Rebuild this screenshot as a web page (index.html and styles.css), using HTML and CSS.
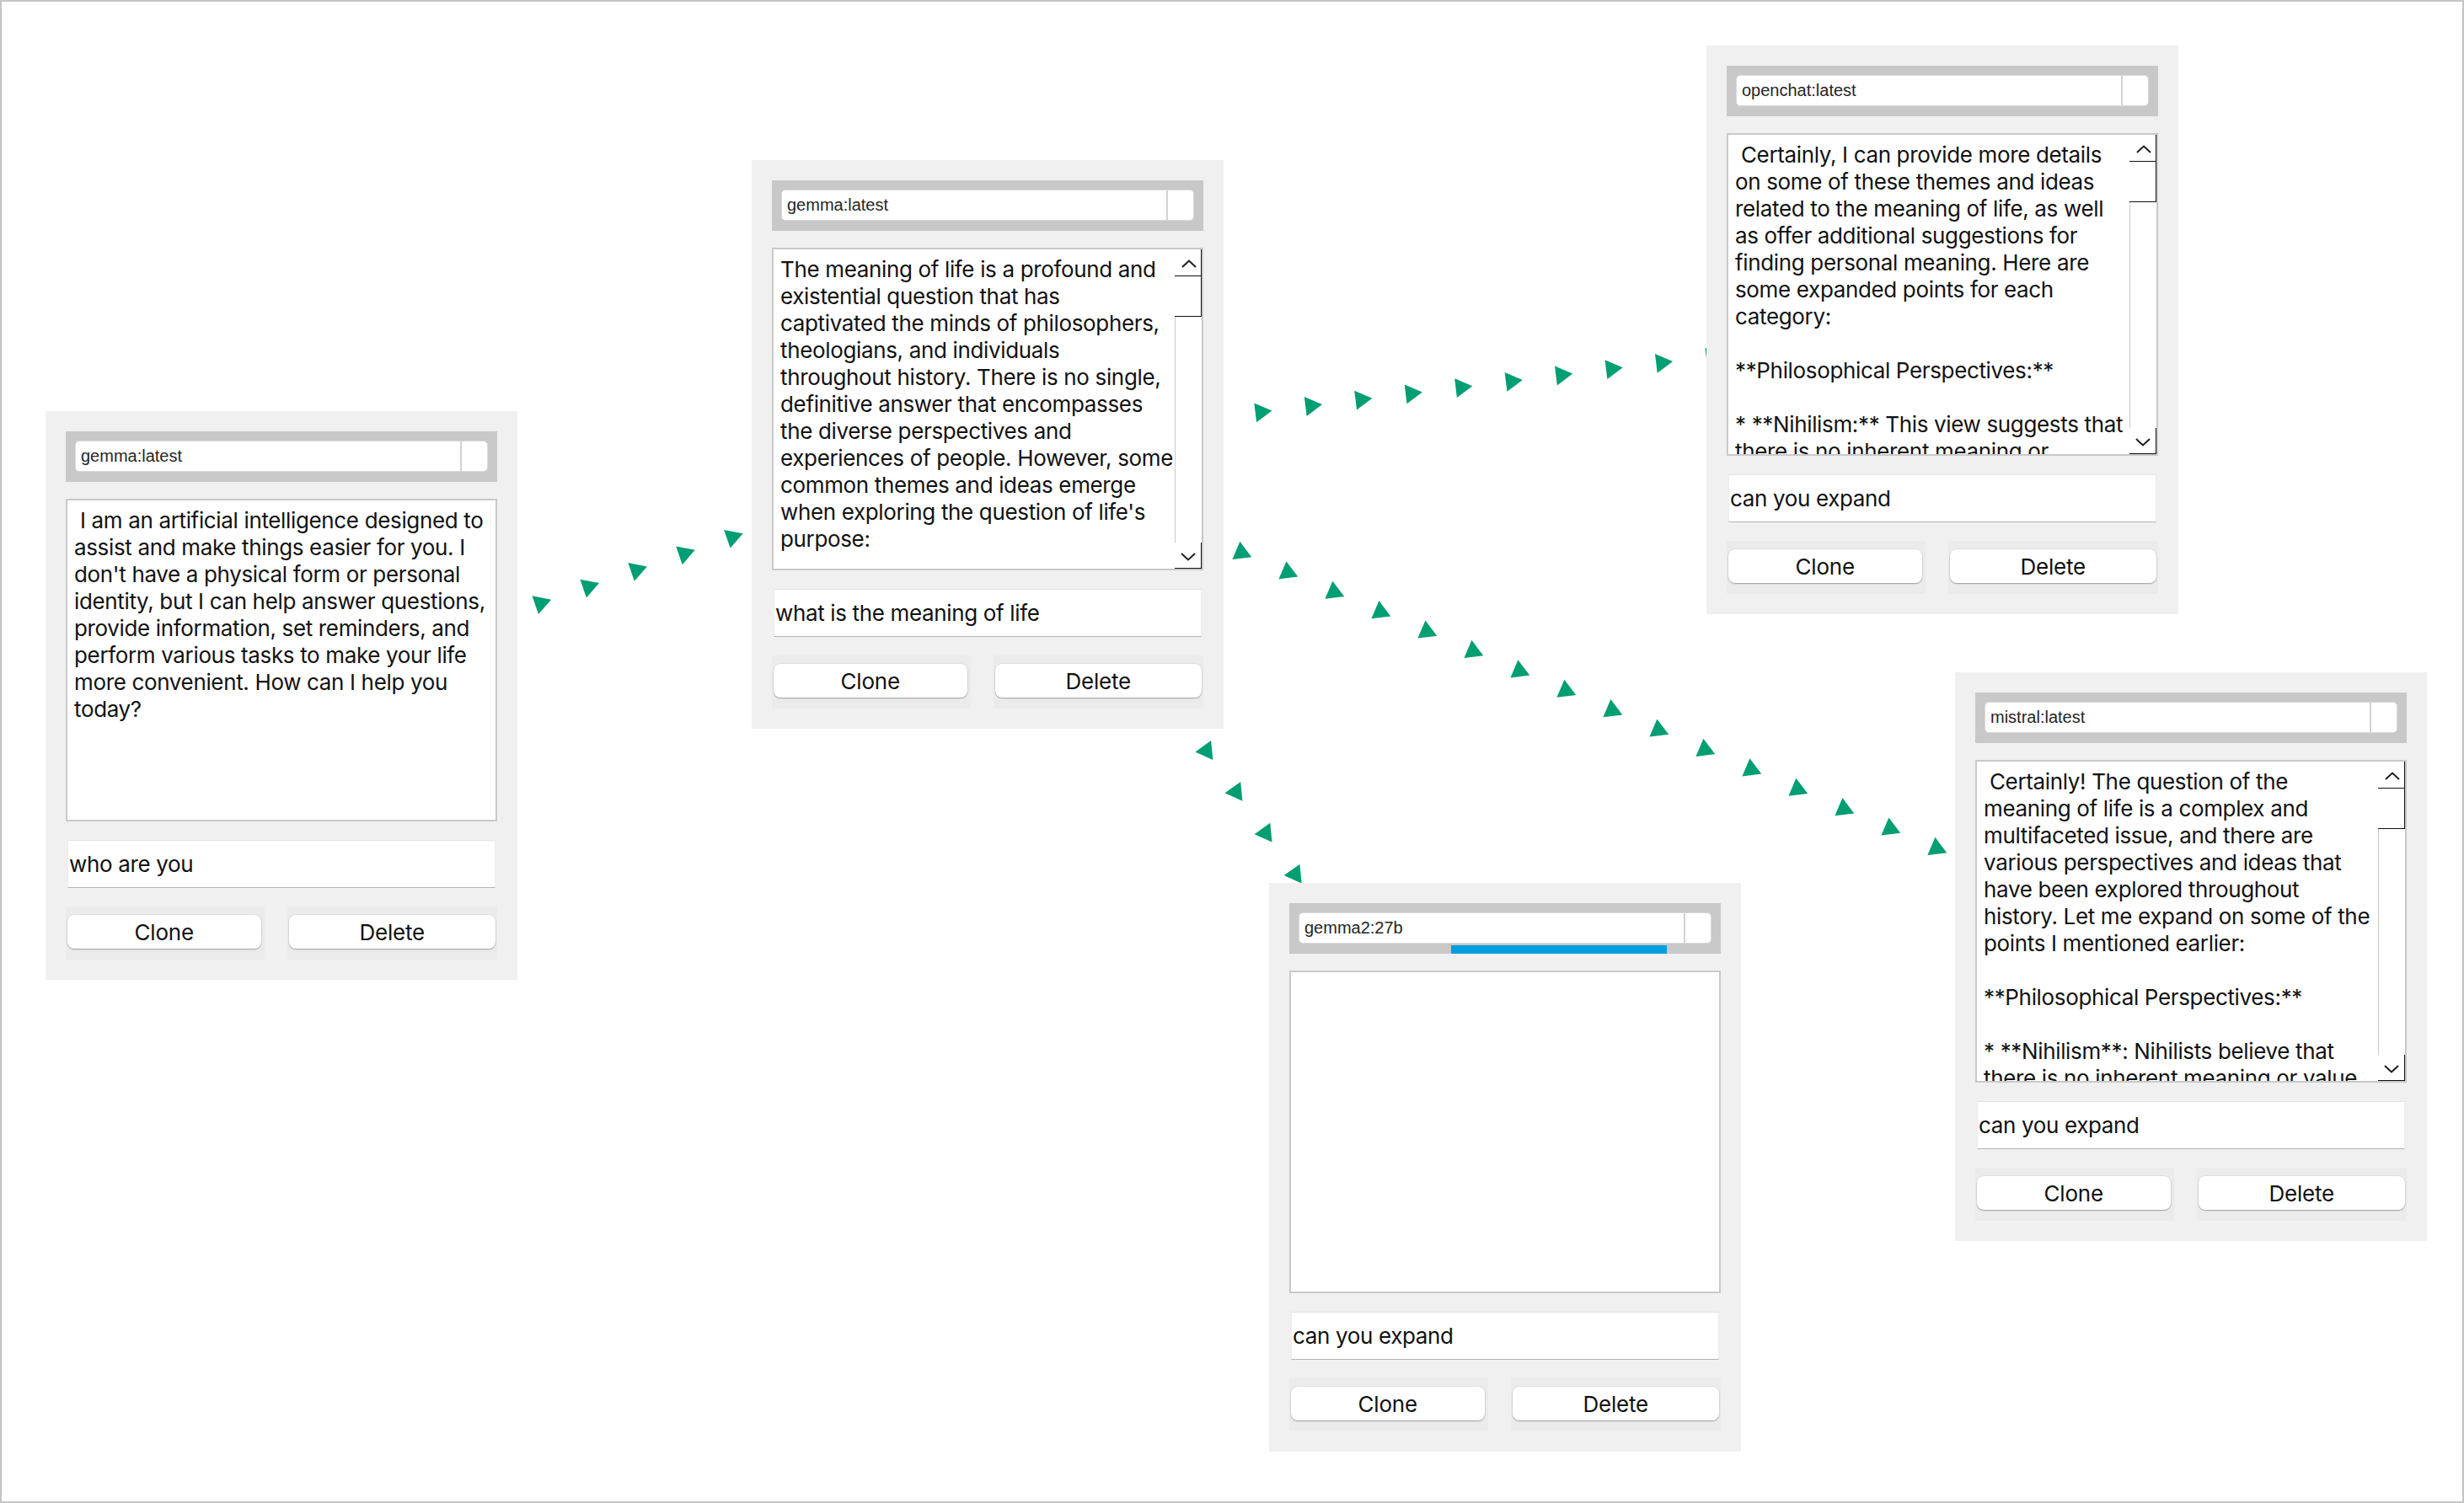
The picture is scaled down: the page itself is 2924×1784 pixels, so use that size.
FILE: index.html
```html
<!DOCTYPE html>
<html lang="en">
<head>
<meta charset="utf-8">
<title>Chat tree</title>
<link rel="stylesheet" href="styles.css">
</head>
<body>
<div class="canvas">
  <svg class="links" width="2924" height="1784" viewBox="0 0 2924 1784">
    <defs>
      <polygon id="tri" points="13.3,0 -6.6,-11.5 -6.6,11.5"/>
    </defs>
    <g class="arrows">
      <use href="#tri" transform="translate(641.5 716) rotate(-19)"/>
      <use href="#tri" transform="translate(698.4 696.4) rotate(-19)"/>
      <use href="#tri" transform="translate(755.3 676.8) rotate(-19)"/>
      <use href="#tri" transform="translate(812.2 657.2) rotate(-19)"/>
      <use href="#tri" transform="translate(869.1 637.6) rotate(-19)"/>

      <use href="#tri" transform="translate(1496.3 489) rotate(-7)"/>
      <use href="#tri" transform="translate(1555.8 481.7) rotate(-7)"/>
      <use href="#tri" transform="translate(1615.2 474.4) rotate(-7)"/>
      <use href="#tri" transform="translate(1674.7 467.1) rotate(-7)"/>
      <use href="#tri" transform="translate(1734.1 459.8) rotate(-7)"/>
      <use href="#tri" transform="translate(1793.6 452.5) rotate(-7)"/>
      <use href="#tri" transform="translate(1853 445.2) rotate(-7)"/>
      <use href="#tri" transform="translate(1912.5 437.9) rotate(-7)"/>
      <use href="#tri" transform="translate(1971.9 430.6) rotate(-7)"/>
      <use href="#tri" transform="translate(2031.4 423.3) rotate(-7)"/>

      <use href="#tri" transform="translate(1431.6 891.1) rotate(54.3)"/>
      <use href="#tri" transform="translate(1466.7 940) rotate(54.3)"/>
      <use href="#tri" transform="translate(1501.8 988.8) rotate(54.3)"/>
      <use href="#tri" transform="translate(1536.9 1037.7) rotate(54.3)"/>

      <use href="#tri" transform="translate(1473 656) rotate(23)"/>
      <use href="#tri" transform="translate(1528 679.4) rotate(23)"/>
      <use href="#tri" transform="translate(1583 702.8) rotate(23)"/>
      <use href="#tri" transform="translate(1638 726.2) rotate(23)"/>
      <use href="#tri" transform="translate(1693 749.6) rotate(23)"/>
      <use href="#tri" transform="translate(1748 773) rotate(23)"/>
      <use href="#tri" transform="translate(1803 796.4) rotate(23)"/>
      <use href="#tri" transform="translate(1858 819.8) rotate(23)"/>
      <use href="#tri" transform="translate(1913 843.2) rotate(23)"/>
      <use href="#tri" transform="translate(1968 866.6) rotate(23)"/>
      <use href="#tri" transform="translate(2023 890) rotate(23)"/>
      <use href="#tri" transform="translate(2078 913.4) rotate(23)"/>
      <use href="#tri" transform="translate(2133 936.8) rotate(23)"/>
      <use href="#tri" transform="translate(2188 960.2) rotate(23)"/>
      <use href="#tri" transform="translate(2243 983.6) rotate(23)"/>
      <use href="#tri" transform="translate(2298 1007) rotate(23)"/>
      <use href="#tri" transform="translate(2353 1030.4) rotate(23)"/>
    </g>
  </svg>

  <!-- Node 1 -->
  <div class="node node-1">
    <div class="model-bar">
      <div class="model-field"><span class="model-name">gemma:latest</span><span class="model-drop"></span></div>
    </div>
    <div class="response">
      <div class="response-text"> I am an artificial intelligence designed to
assist and make things easier for you. I
don't have a physical form or personal
identity, but I can help answer questions,
provide information, set reminders, and
perform various tasks to make your life
more convenient. How can I help you
today?</div>
    </div>
    <div class="prompt">who are you</div>
    <div class="actions">
      <div class="btn-frame frame-clone"><button class="btn">Clone</button></div>
      <div class="btn-frame frame-delete"><button class="btn">Delete</button></div>
    </div>
  </div>

  <!-- Node 2 -->
  <div class="node node-2">
    <div class="model-bar">
      <div class="model-field"><span class="model-name">gemma:latest</span><span class="model-drop"></span></div>
    </div>
    <div class="response">
      <div class="response-text">The meaning of life is a profound and
existential question that has
captivated the minds of philosophers,
theologians, and individuals
throughout history. There is no single,
definitive answer that encompasses
the diverse perspectives and
experiences of people. However, some
common themes and ideas emerge
when exploring the question of life's
purpose:</div>
      <div class="scrollbar">
        <div class="sb-up"><svg class="chev" width="18" height="10" viewBox="0 0 18 10"><polyline points="1,9 9,1.5 17,9"/></svg></div>
        <div class="sb-thumb"></div>
        <div class="sb-track"></div>
        <div class="sb-down"><svg class="chev" width="18" height="10" viewBox="0 0 18 10"><polyline points="1,1 9,8.5 17,1"/></svg></div>
      </div>
    </div>
    <div class="prompt">what is the meaning of life</div>
    <div class="actions">
      <div class="btn-frame frame-clone"><button class="btn">Clone</button></div>
      <div class="btn-frame frame-delete"><button class="btn">Delete</button></div>
    </div>
  </div>

  <!-- Node 3 -->
  <div class="node node-3">
    <div class="model-bar">
      <div class="model-field"><span class="model-name">openchat:latest</span><span class="model-drop"></span></div>
    </div>
    <div class="response">
      <div class="response-text"> Certainly, I can provide more details
on some of these themes and ideas
related to the meaning of life, as well
as offer additional suggestions for
finding personal meaning. Here are
some expanded points for each
category:

**Philosophical Perspectives:**

* **Nihilism:** This view suggests that
there is no inherent meaning or</div>
      <div class="scrollbar">
        <div class="sb-up"><svg class="chev" width="18" height="10" viewBox="0 0 18 10"><polyline points="1,9 9,1.5 17,9"/></svg></div>
        <div class="sb-thumb"></div>
        <div class="sb-track"></div>
        <div class="sb-down"><svg class="chev" width="18" height="10" viewBox="0 0 18 10"><polyline points="1,1 9,8.5 17,1"/></svg></div>
      </div>
    </div>
    <div class="prompt">can you expand</div>
    <div class="actions">
      <div class="btn-frame frame-clone"><button class="btn">Clone</button></div>
      <div class="btn-frame frame-delete"><button class="btn">Delete</button></div>
    </div>
  </div>

  <!-- Node 4 -->
  <div class="node node-4">
    <div class="model-bar loading">
      <div class="model-field"><span class="model-name">gemma2:27b</span><span class="model-drop"></span></div>
      <div class="progress"></div>
    </div>
    <div class="response">
      <div class="response-text"></div>
    </div>
    <div class="prompt">can you expand</div>
    <div class="actions">
      <div class="btn-frame frame-clone"><button class="btn">Clone</button></div>
      <div class="btn-frame frame-delete"><button class="btn">Delete</button></div>
    </div>
  </div>

  <!-- Node 5 -->
  <div class="node node-5">
    <div class="model-bar">
      <div class="model-field"><span class="model-name">mistral:latest</span><span class="model-drop"></span></div>
    </div>
    <div class="response">
      <div class="response-text"> Certainly! The question of the
meaning of life is a complex and
multifaceted issue, and there are
various perspectives and ideas that
have been explored throughout
history. Let me expand on some of the
points I mentioned earlier:

**Philosophical Perspectives:**

* **Nihilism**: Nihilists believe that
there is no inherent meaning or value</div>
      <div class="scrollbar">
        <div class="sb-up"><svg class="chev" width="18" height="10" viewBox="0 0 18 10"><polyline points="1,9 9,1.5 17,9"/></svg></div>
        <div class="sb-thumb"></div>
        <div class="sb-track"></div>
        <div class="sb-down"><svg class="chev" width="18" height="10" viewBox="0 0 18 10"><polyline points="1,1 9,8.5 17,1"/></svg></div>
      </div>
    </div>
    <div class="prompt">can you expand</div>
    <div class="actions">
      <div class="btn-frame frame-clone"><button class="btn">Clone</button></div>
      <div class="btn-frame frame-delete"><button class="btn">Delete</button></div>
    </div>
  </div>
</div>
</body>
</html>
```

FILE: styles.css
```css
html, body {
  margin: 0;
  padding: 0;
  background: #ffffff;
}

.canvas {
  position: relative;
  width: 2924px;
  height: 1784px;
  overflow: hidden;
  background: #ffffff;
  font-family: Inter, "Liberation Sans", "Noto Sans", sans-serif;
  color: #141414;
}

.canvas::after {
  content: "";
  position: absolute;
  inset: 0;
  border: 2px solid #c4c4c4;
  pointer-events: none;
}

.links {
  position: absolute;
  left: 0;
  top: 0;
  z-index: 0;
}

.arrows use {
  fill: #009e73;
}

/* ---------- node card ---------- */
.node {
  position: absolute;
  z-index: 1;
  box-sizing: border-box;
  width: 560px;
  height: 675px;
  padding: 24px 24px 0 24px;
  background: #f0f0f0;
  display: flex;
  flex-direction: column;
}

.node-1 { left: 54px;   top: 488px; }
.node-2 { left: 892px;  top: 190px; }
.node-3 { left: 2025px; top: 54px;  }
.node-4 { left: 1506px; top: 1048px; }
.node-5 { left: 2320px; top: 798px; }

/* ---------- model selector ---------- */
.model-bar {
  box-sizing: border-box;
  height: 60px;
  flex-shrink: 0;
  padding: 11px 11px 12px 11px;
  background: #c8c8c8;
  display: flex;
  flex-direction: column;
}

.model-bar.loading {
  padding-bottom: 0;
}

.model-field {
  box-sizing: border-box;
  height: 37px;
  flex-shrink: 0;
  background: #ffffff;
  border: 1px solid #d9d9d9;
  border-radius: 5px;
  display: flex;
  align-items: center;
}

.model-name {
  flex: 1;
  padding-left: 6px;
  font-family: "Liberation Sans", Arial, sans-serif;
  font-size: 20px;
  color: #262626;
}

.model-drop {
  align-self: stretch;
  width: 30px;
  border-left: 2px solid #d2d2d2;
}

.progress {
  flex-shrink: 0;
  margin-top: 2px;
  margin-left: 181px;
  width: 256px;
  height: 10px;
  background: #009ee0;
}

/* ---------- response text ---------- */
.response {
  box-sizing: border-box;
  margin-top: 20px;
  height: 383px;
  flex-shrink: 0;
  background: #ffffff;
  border: 2px solid #c9c9c9;
  display: flex;
  overflow: hidden;
}

.response-text {
  flex: 1;
  padding: 8px 0 0 8px;
  white-space: pre;
  overflow: hidden;
  font-size: 26px;
  line-height: 32px;
  letter-spacing: -0.35px;
  color: #121212;
}

.scrollbar {
  width: 32px;
  flex-shrink: 0;
  display: flex;
  flex-direction: column;
}

.sb-up {
  box-sizing: border-box;
  height: 32px;
  border-right: 1px solid #111;
  border-bottom: 1px solid #111;
  padding: 12px 0 0 8px;
}

.sb-thumb {
  box-sizing: border-box;
  height: 48px;
  border-right: 1px solid #111;
  border-bottom: 1px solid #111;
}

.sb-track {
  flex: 1;
  border-left: 1px solid #c8c8c8;
}

.sb-down {
  box-sizing: border-box;
  height: 31px;
  border-right: 1px solid #111;
  border-bottom: 1px solid #111;
  padding: 12px 0 0 7px;
}

.chev {
  display: block;
}

.chev polyline {
  fill: none;
  stroke: #1e1e1e;
  stroke-width: 2;
}

/* ---------- prompt entry ---------- */
.prompt {
  box-sizing: border-box;
  margin: 22px 2px 0 2px;
  height: 57px;
  flex-shrink: 0;
  padding-left: 1px;
  background: #ffffff;
  border-top: 1px solid #e3e3e3;
  border-left: 1px solid #ececec;
  border-right: 1px solid #ececec;
  border-bottom: 1px solid #b4b4b4;
  display: flex;
  align-items: center;
  font-size: 26px;
  letter-spacing: -0.35px;
  color: #111;
}

/* ---------- buttons ---------- */
.actions {
  margin-top: 22px;
  height: 63px;
  flex-shrink: 0;
  display: flex;
  gap: 27px;
}

.btn-frame {
  box-sizing: border-box;
  height: 63px;
  background: #ebebeb;
  padding-top: 10px;
}

.frame-clone {
  width: 236px;
  padding-left: 2px;
  padding-right: 4px;
}

.frame-delete {
  width: 250px;
  padding-left: 2px;
  padding-right: 2px;
}

.btn {
  display: block;
  width: 100%;
  height: 40px;
  margin: 0;
  padding: 0;
  border: none;
  border-radius: 8px;
  background: #ffffff;
  box-shadow: 0 1px 1.5px rgba(0, 0, 0, 0.3), 0 0 0 0.5px rgba(0, 0, 0, 0.08);
  font-family: Inter, "Liberation Sans", sans-serif;
  font-size: 26px;
  letter-spacing: -0.2px;
  color: #111;
}
```
